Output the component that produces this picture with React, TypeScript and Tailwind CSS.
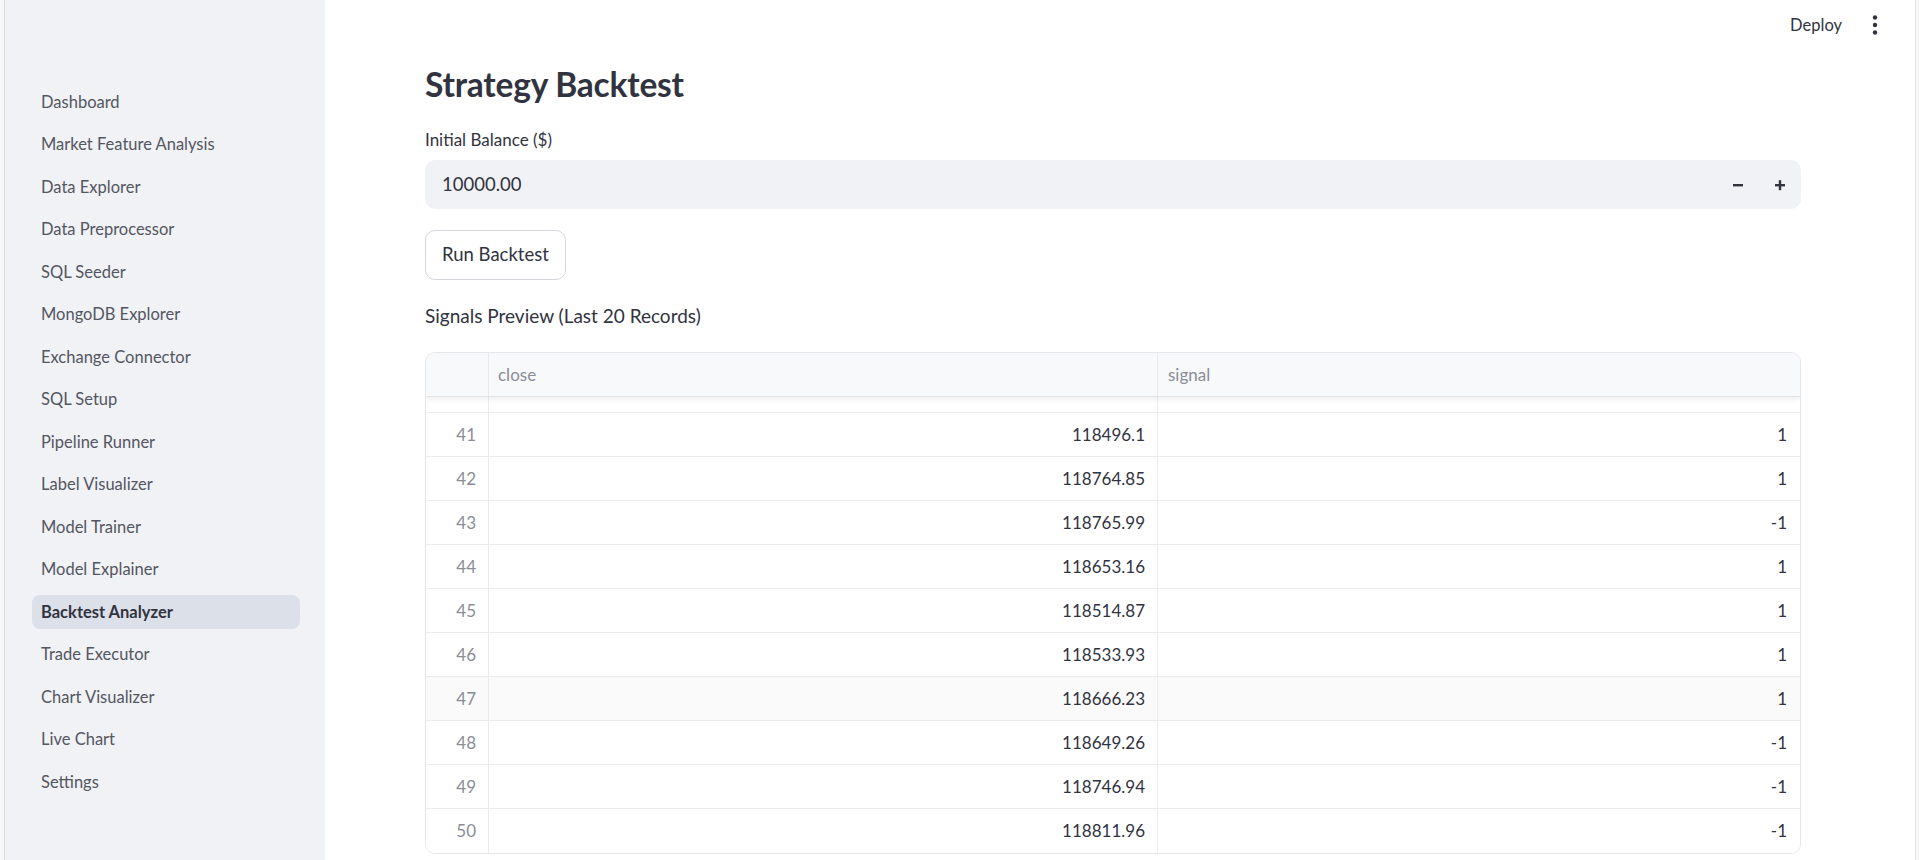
import React from 'react';

const navItems = [
  'Dashboard',
  'Market Feature Analysis',
  'Data Explorer',
  'Data Preprocessor',
  'SQL Seeder',
  'MongoDB Explorer',
  'Exchange Connector',
  'SQL Setup',
  'Pipeline Runner',
  'Label Visualizer',
  'Model Trainer',
  'Model Explainer',
  'Backtest Analyzer',
  'Trade Executor',
  'Chart Visualizer',
  'Live Chart',
  'Settings',
];

const rows = [
  { idx: 41, close: '118496.1', signal: '1' },
  { idx: 42, close: '118764.85', signal: '1' },
  { idx: 43, close: '118765.99', signal: '-1' },
  { idx: 44, close: '118653.16', signal: '1' },
  { idx: 45, close: '118514.87', signal: '1' },
  { idx: 46, close: '118533.93', signal: '1' },
  { idx: 47, close: '118666.23', signal: '1' },
  { idx: 48, close: '118649.26', signal: '-1' },
  { idx: 49, close: '118746.94', signal: '-1' },
  { idx: 50, close: '118811.96', signal: '-1' },
];

export default function App() {
  return (
    <div className="flex h-[860px] w-[1919px] overflow-hidden bg-white font-['Lato','Noto_Sans',sans-serif] text-[#31333f]">
      {/* window edge */}
      <div className="w-[5px] shrink-0 border-r border-[#dadbdf] bg-[#f7f7f8]" />

      {/* Sidebar */}
      <aside className="w-[320px] shrink-0 bg-[#f0f2f6] pt-[85px] pl-[27px] pr-[25px]">
        <nav className="flex flex-col gap-[8.5px]">
          {navItems.map((item) => {
            const active = item === 'Backtest Analyzer';
            return (
              <div
                key={item}
                className={
                  active
                    ? 'flex h-[34px] items-center rounded-[8px] bg-[#dce0e9] pl-[9px] text-[16.5px] font-bold text-[#31333f]'
                    : 'flex h-[34px] items-center rounded-[8px] pl-[9px] text-[16.5px] text-[#545661]'
                }
              >
                {item}
              </div>
            );
          })}
        </nav>
      </aside>

      {/* Main */}
      <main className="relative flex-1">
        {/* Top toolbar */}
        <div className="absolute right-[37px] top-[11px] flex items-center">
          <span className="text-[16.5px] leading-[28px] text-[#31333f]">Deploy</span>
          <svg width="6" height="22" viewBox="0 0 6 22" className="ml-[30px]">
            <circle cx="3" cy="3.5" r="2.2" fill="#31333f" />
            <circle cx="3" cy="11" r="2.2" fill="#31333f" />
            <circle cx="3" cy="18.5" r="2.2" fill="#31333f" />
          </svg>
        </div>

        <div className="w-[1476px] pl-[100px]">
          <h1 className="mt-[62px] h-[44px] text-[33.5px] font-bold leading-[44px] tracking-[-0.2px]">
            Strategy Backtest
          </h1>

          <div className="mt-[22px] h-[24px] text-[17px] leading-[24px]">Initial Balance ($)</div>

          <div className="mt-[8px] flex h-[49px] items-center rounded-[10px] bg-[#f0f2f6] pl-[17px] pr-[14px]">
            <span className="flex-1 text-[18.5px]">10000.00</span>
            <svg width="14" height="14" viewBox="0 0 14 14" className="mr-[28px]">
              <rect x="2" y="6" width="10" height="2.4" fill="#31333f" />
            </svg>
            <svg width="14" height="14" viewBox="0 0 14 14">
              <rect x="2" y="6" width="10" height="2.4" fill="#31333f" />
              <rect x="5.8" y="2.2" width="2.4" height="10" fill="#31333f" />
            </svg>
          </div>

          <button className="mt-[21px] flex h-[50px] items-center rounded-[10px] border border-[#d5d6db] bg-white px-[16px] text-[18.5px] text-[#31333f]">
            Run Backtest
          </button>

          <div className="mt-[22px] h-[28px] text-[19px] leading-[28px]">Signals Preview (Last 20 Records)</div>

          {/* Data table */}
          <div className="mt-[22px] overflow-hidden rounded-[10px] border border-[#e6e7eb] text-[17px]">
            <div className="relative z-10 flex h-[44px] border-b border-[#e2e3e7] bg-[#f8f9fb] text-[#8b8d96] shadow-[0_3px_5px_rgba(0,0,0,0.06)]">
              <div className="w-[63px] border-r border-[#e9eaee]" />
              <div className="flex w-[669px] items-center border-r border-[#e9eaee] pl-[9px]">close</div>
              <div className="flex flex-1 items-center pl-[10px]">signal</div>
            </div>
            <div className="flex h-[16px] border-b border-[#ebecef]">
              <div className="w-[63px] border-r border-[#ebecef]" />
              <div className="w-[669px] border-r border-[#ebecef]" />
              <div className="flex-1" />
            </div>
            {rows.map((r, i) => (
              <div
                key={r.idx}
                className={`flex h-[44px] ${i < rows.length - 1 ? 'border-b border-[#ebecef]' : ''} ${r.idx === 47 ? 'bg-[#fafafa]' : 'bg-white'}`}
              >
                <div className="flex w-[63px] items-center justify-end border-r border-[#ebecef] pr-[12px] text-[#8b8d96]">
                  {r.idx}
                </div>
                <div className="flex w-[669px] items-center justify-end border-r border-[#ebecef] pr-[12px]">
                  {r.close}
                </div>
                <div className="flex flex-1 items-center justify-end pr-[13px]">{r.signal}</div>
              </div>
            ))}
          </div>
        </div>
      </main>

      {/* right window edge */}
      <div className="w-[4px] shrink-0 border-l border-[#e2e3e6] bg-[#f7f7f8]" />
    </div>
  );
}
